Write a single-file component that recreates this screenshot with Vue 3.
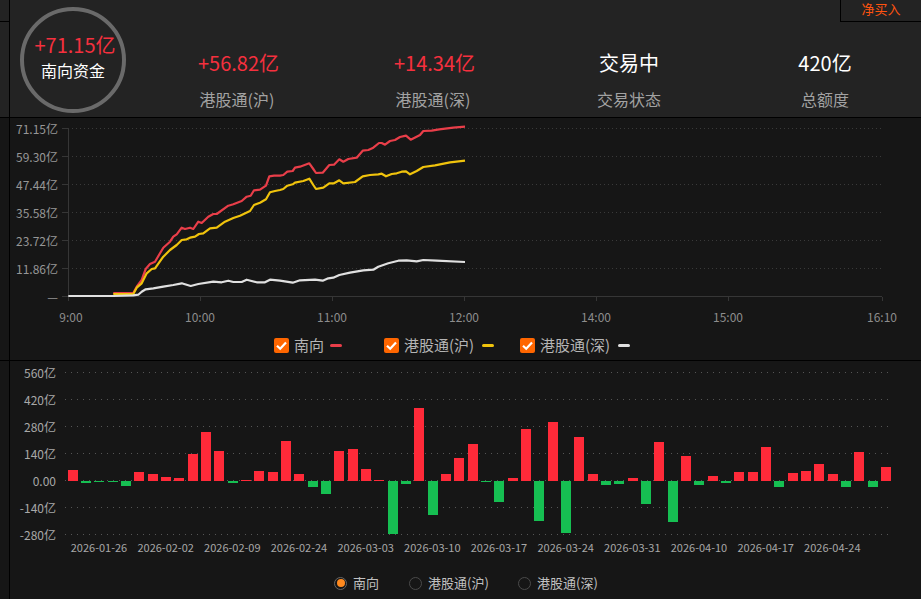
<script setup>
const stats = [
  { value: '+56.82亿', label: '港股通(沪)', up: true },
  { value: '+14.34亿', label: '港股通(深)', up: true },
  { value: '交易中', label: '交易状态', up: false },
  { value: '420亿', label: '总额度', up: false },
]

const toPoints = (left, right) =>
  [
    ...left.map(([x, y]) => [x / 3, 115 + y / 3]),
    ...right.map(([x, y]) => [280 + x / 3, 115 + y / 3]),
  ]
    .map(([x, y]) => `${x.toFixed(1)},${y.toFixed(1)}`)
    .join(' ')

const redLine = toPoints(
  [[340,534],[400,534],[410,515],[425,495],[437,462],[450,447],[465,440],[490,398],[510,380],[520,365],[530,358],[545,338],[555,342],[570,338],[580,342],[595,320],[605,324],[625,305],[640,297],[650,297],[685,272],[700,268],[725,258],[740,245],[752,242],[762,226],[780,224],[798,212],[808,184],[822,182]],
  [[0,182],[10,180],[22,170],[38,168],[45,158],[60,155],[88,145],[100,162],[108,174],[128,173],[148,150],[162,149],[178,133],[190,140],[205,132],[230,128],[248,107],[265,105],[280,98],[297,84],[305,84],[315,89],[330,78],[345,75],[360,66],[378,62],[392,74],[420,60],[430,48],[455,47],[478,43],[520,38],[555,35]],
)
const yellowLine = toPoints(
  [[340,537],[400,537],[410,518],[425,505],[440,475],[455,462],[465,460],[490,425],[510,405],[530,390],[545,375],[560,373],[570,368],[585,365],[597,357],[610,355],[630,340],[650,338],[675,320],[700,309],[720,302],[750,288],[762,270],[780,263],[798,253],[810,232],[825,228]],
  [[0,225],[10,222],[22,212],[38,208],[45,203],[70,198],[88,191],[100,210],[108,222],[130,218],[148,205],[162,205],[178,196],[190,205],[225,201],[248,184],[270,180],[295,178],[305,176],[318,184],[335,177],[350,175],[365,170],[378,169],[390,178],[410,168],[430,156],[465,151],[510,142],[555,137]],
)
const whiteLine = toPoints(
  [[205,543],[340,543],[400,541],[415,539],[425,530],[437,523],[460,520],[490,515],[520,510],[545,505],[572,513],[595,507],[640,500],[665,502],[685,497],[700,501],[725,501],[740,494],[770,502],[795,502],[810,494]],
  [[0,497],[38,503],[60,496],[105,494],[128,497],[145,490],[160,488],[178,480],[210,473],[250,466],[280,464],[295,455],[325,445],[355,437],[380,436],[410,439],[430,435],[470,437],[555,441]],
)

const lineGrid = [
  { y: 128, label: '71.15亿' },
  { y: 156, label: '59.30亿' },
  { y: 184, label: '47.44亿' },
  { y: 212, label: '35.58亿' },
  { y: 240, label: '23.72亿' },
  { y: 268, label: '11.86亿' },
]
const timeTicks = [
  { x: 68, labelX: 71, label: '9:00' },
  { x: 200, labelX: 200, label: '10:00' },
  { x: 332, labelX: 332, label: '11:00' },
  { x: 464, labelX: 464, label: '12:00' },
  { x: 596, labelX: 596, label: '14:00' },
  { x: 728, labelX: 728, label: '15:00' },
  { x: 882, labelX: 882, label: '16:10' },
]
const lineLegend = [
  { name: '南向', color: '#e93e49' },
  { name: '港股通(沪)', color: '#f0c30c' },
  { name: '港股通(深)', color: '#e0e0e0' },
]
const radioLegend = [
  { name: '南向', on: true },
  { name: '港股通(沪)', on: false },
  { name: '港股通(深)', on: false },
]

const barGrid = [
  { y: 372.5, label: '560亿' },
  { y: 399.5, label: '420亿' },
  { y: 426.5, label: '280亿' },
  { y: 453.5, label: '140亿' },
  { y: 480.5, label: '0.00' },
  { y: 507.5, label: '-140亿' },
  { y: 534.5, label: '-280亿' },
]
const ZERO = 481
const values = [11,-2,-1,-1,-5,9,7,4,3,27,49,30,-2,1,10,9,40,7,-6,-13,30,32,12,1,-53,-3,73,-34,7,23,37,-1,-21,3,52,-40,59,-52,44,7,-4,-3,3,-23,39,-41,25,-4,5,-2,9,9,34,-6,8,10,17,7,-6,29,-6,14]
const bars = values.map((v, i) => ({
  x: Math.floor(68 + (i * 40) / 3),
  y: v >= 0 ? ZERO - v : ZERO,
  h: Math.abs(v),
  up: v >= 0,
}))
const dates = ['2026-01-26','2026-02-02','2026-02-09','2026-02-24','2026-03-03','2026-03-10','2026-03-17','2026-03-24','2026-03-31','2026-04-10','2026-04-17','2026-04-24']
const dateLabels = dates.map((label, i) => ({ label, x: 99 + (i * 200) / 3 }))
</script>

<template>
  <div class="page">
    <section class="row head-row">
      <div class="strip head-strip"><div class="strip-cap"></div></div>
      <header class="head">
        <div class="ring">
          <span class="ring-value">+71.15亿</span>
          <span class="ring-label">南向资金</span>
        </div>
        <div class="stats">
          <div v-for="s in stats" :key="s.label" class="stat">
            <span class="stat-value" :class="{ up: s.up }">{{ s.value }}</span>
            <span class="stat-label">{{ s.label }}</span>
          </div>
        </div>
        <div class="tab">净买入</div>
      </header>
    </section>

    <section class="row chart-row">
      <div class="strip"></div>
      <div class="chart">
        <svg class="line-svg" viewBox="10 118 911 212" width="911" height="212">
          <line v-for="g in lineGrid" :key="g.y" class="dots" x1="72" x2="882" :y1="g.y + 0.5" :y2="g.y + 0.5" />
          <line v-for="g in lineGrid" :key="'t' + g.y" class="axis" x1="62" x2="68" :y1="g.y + 0.5" :y2="g.y + 0.5" />
          <text v-for="g in lineGrid" :key="g.label" class="y-label" x="58" :y="g.y">{{ g.label }}</text>
          <text class="y-label" x="58" y="296">—</text>
          <line class="axis" x1="68.5" x2="68.5" y1="128" y2="297" />
          <line class="axis" x1="62" x2="882" y1="296.5" y2="296.5" />
          <line v-for="t in timeTicks" :key="t.x" class="axis" :x1="t.x + 0.5" :x2="t.x + 0.5" y1="297" y2="301" />
          <text v-for="t in timeTicks" :key="t.label" class="x-label" :x="t.labelX" y="316">{{ t.label }}</text>
          <polyline class="curve" stroke="#e93e49" :points="redLine" />
          <polyline class="curve" stroke="#f0c30c" :points="yellowLine" />
          <polyline class="curve" stroke="#e0e0e0" :points="whiteLine" />
        </svg>
        <div class="legend check-legend">
          <div v-for="l in lineLegend" :key="l.name" class="check-item">
            <svg class="check" viewBox="0 0 15 15" width="15" height="15">
              <rect width="15" height="15" rx="2" fill="#ff6600" />
              <path d="M3 7.8 L6.2 10.8 L12 4.4" fill="none" stroke="#fff" stroke-width="2.2" />
            </svg>
            <span>{{ l.name }}</span>
            <i class="swatch" :style="{ background: l.color }"></i>
          </div>
        </div>
      </div>
    </section>

    <section class="row bar-row">
      <div class="strip"></div>
      <div class="chart">
        <svg class="bar-svg" viewBox="10 361 911 209" width="911" height="209">
          <line v-for="g in barGrid" :key="g.y" class="dots bar-dots" x1="65" x2="891" :y1="g.y" :y2="g.y" />
          <text v-for="g in barGrid" :key="g.label" class="y-label bright" x="56" :y="g.y">{{ g.label }}</text>
          <rect v-for="(b, i) in bars" :key="i" :x="b.x" :y="b.y" width="10" :height="b.h" :fill="b.up ? '#ff2a39' : '#16bf52'" />
          <text v-for="d in dateLabels" :key="d.label" class="date-label" :x="d.x" y="547">{{ d.label }}</text>
        </svg>
        <div class="legend radio-legend">
          <div v-for="r in radioLegend" :key="r.name" class="radio-item">
            <span class="radio" :class="{ on: r.on }"></span>
            <span>{{ r.name }}</span>
          </div>
        </div>
      </div>
    </section>
  </div>
</template>

<style scoped>
.page {
  width: 921px;
  height: 599px;
  overflow: hidden;
  background: #161616;
  font-family: "Noto Sans CJK SC", "Noto Sans", sans-serif;
  display: flex;
  flex-direction: column;
}
.row {
  display: flex;
  border-bottom: 1px solid #000;
  box-sizing: border-box;
}
.strip {
  width: 10px;
  flex: none;
  box-sizing: border-box;
  border-right: 1px solid #000;
}
.head-row { height: 118px; background: #232323; }
.chart-row { height: 243px; }
.bar-row { height: 238px; border-bottom: 0; }
.strip-cap { height: 22px; box-sizing: border-box; border-bottom: 1px solid #000; }

.head {
  flex: 1;
  min-width: 0;
  display: grid;
  grid-template-columns: 129px minmax(0, 1fr);
  grid-template-rows: 1fr;
}
.ring {
  grid-area: 1 / 1;
  width: 106px;
  height: 106px;
  margin: 7px 0 0 10px;
  box-sizing: border-box;
  border: 4px solid #6a6a6a;
  border-radius: 50%;
  display: flex;
  flex-direction: column;
  align-items: center;
  justify-content: center;
}
.ring-value { color: #f5303e; font-size: 20px; line-height: 26px; margin: -7px 0 0 4px; white-space: nowrap; }
.ring-label { color: #fff; font-size: 16px; line-height: 24px; }
.stats { grid-area: 1 / 2; display: flex; }
.stat {
  width: 196px;
  flex: none;
  display: flex;
  flex-direction: column;
  align-items: center;
  padding-top: 49px;
  box-sizing: border-box;
}
.stat-value { color: #fff; font-size: 20px; line-height: 28px; }
.stat-value.up { color: #f5303e; margin-left: 3px; }
.stat-label { color: #a2a2a2; font-size: 16px; line-height: 24px; margin-top: 10px; }
.tab {
  grid-area: 1 / 1 / 2 / 3;
  justify-self: end;
  align-self: start;
  width: 81px;
  height: 22px;
  box-sizing: border-box;
  border-left: 1px solid #000;
  border-bottom: 1px solid #000;
  color: #ff5310;
  font-size: 13px;
  line-height: 18px;
  text-align: center;
}

.chart { flex: 1; display: flex; flex-direction: column; min-width: 0; }
svg { display: block; flex: none; }
.dots { stroke: #3a3a3a; stroke-width: 1; stroke-dasharray: 1 3; }
.bar-dots { stroke: #555; stroke-dasharray: 1 5; }
.axis { stroke: #363636; stroke-width: 1; }
.y-label { fill: #969696; font-size: 12px; text-anchor: end; dominant-baseline: central; }
.y-label.bright { fill: #a8a8a8; }
.x-label { fill: #8d8d8d; font-size: 12px; text-anchor: middle; dominant-baseline: central; }
.date-label { fill: #a8a8a8; font-size: 11px; text-anchor: middle; dominant-baseline: central; }
.curve { fill: none; stroke-width: 2.2; stroke-linejoin: round; }

.legend { display: flex; align-items: center; color: #b4b4b4; white-space: nowrap; }
.check-legend { height: 30px; padding: 0 0 0 264px; font-size: 15px; }
.check-item { display: flex; align-items: center; width: 110px; flex: none; }
.check-item:nth-child(2) { width: 136px; }
.check-item span { margin-left: 5px; line-height: 20px; }
.swatch { width: 12px; height: 3px; border-radius: 2px; margin-left: 6px; flex: none; }
.check-item:nth-child(n + 2) .swatch { margin-left: 8px; }
.radio-legend { height: 29px; padding: 0 0 3px 324px; box-sizing: border-box; font-size: 13px; color: #c0c0c0; }
.radio-item { display: flex; align-items: center; width: 75px; flex: none; }
.radio-item:nth-child(2) { width: 109px; }
.radio-item span:last-child { margin-left: 6px; line-height: 20px; }
.radio {
  width: 13px;
  height: 13px;
  flex: none;
  box-sizing: border-box;
  border: 1.5px solid #4a4a4a;
  border-radius: 50%;
  display: flex;
  align-items: center;
  justify-content: center;
}
.radio.on { border-color: #666; }
.radio.on::after {
  content: "";
  width: 8px;
  height: 8px;
  border-radius: 50%;
  background: #ff8a1f;
}
</style>
